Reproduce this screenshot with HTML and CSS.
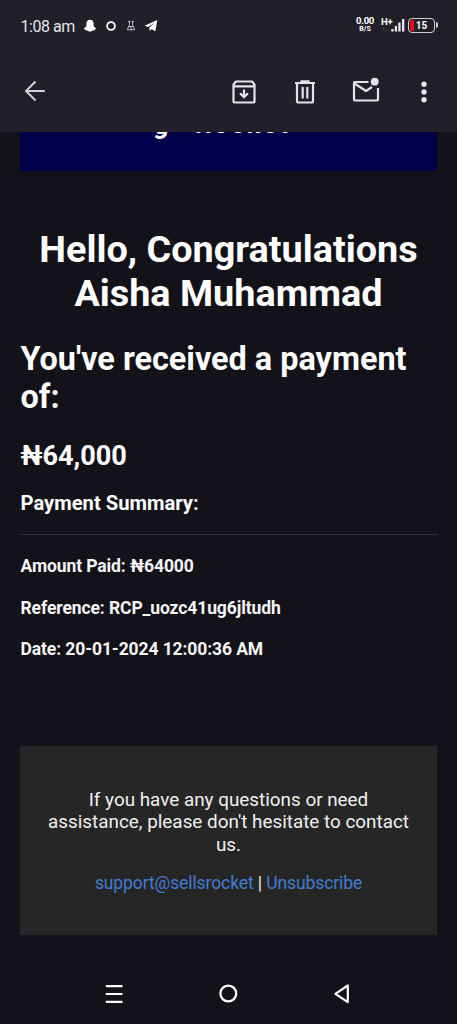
FILE: index.html
```html
<!DOCTYPE html>
<html lang="en">
<head>
<meta charset="utf-8">
<title>Payment received</title>
<link rel="stylesheet" href="styles.css">
</head>
<body>
<div class="screen">
  <header class="top">
    <div class="status">
      <div class="status-left">
        <span class="clock">1:08 am</span>
        <svg class="snap" width="14" height="14" viewBox="0 0 14 14"><path fill="#fff" d="M7 .8c2.300 0 3.600 1.500 3.600 3.700v2c.2.900.9 2 2.700 2.800.2.500-.7.900-1.500 1.100-.2.900-.6 1.100-1.900 1-1 .2-1.600 1.100-2.900 1.100s-1.900-.9-2.900-1.100c-1.300.1-1.700-.1-1.900-1C1.400 10.200.500 9.800.700 9.300 2.500 8.500 3.200 7.400 3.400 6.500v-2C3.400 2.300 4.700.8 7 .8z"/></svg>
        <svg class="ring" width="12" height="12" viewBox="0 0 12 12"><circle cx="6" cy="6" r="3.900" fill="none" stroke="#fff" stroke-width="1.800"/></svg>
        <svg class="flask" width="10" height="12" viewBox="0 0 10 12"><path fill="none" stroke="#cfced4" stroke-width=".9" d="M2 1.500h2.300M5.700 1.500H8M3.500 1.500v3L1.300 9.800h7.400L6.500 4.500v-3M3 6.500h4M5 6.500v3.300"/></svg>
        <svg class="plane" width="14" height="14" viewBox="0 0 14 14"><path fill="#fff" d="M.6 6.800 13.300 1 11.300 12.600 7.700 10 5.800 12 5.300 8.600 10.800 3.800 4 8z"/></svg>
      </div>
      <div class="status-right">
        <div class="rate"><b>0.00</b><span>B/S</span></div>
        <div class="net"><b>H+</b><span>↑↓</span></div>
        <svg class="signal" width="14" height="14" viewBox="0 0 14 14"><path fill="#e8e7ed" d="M.3 11h2.300v2.500H.3zM3.800 8h2.300v5.500H3.800zM7.300 4.500h2.300v9H7.300zM11 1h2.300v12.500H11z"/></svg>
        <div class="battery"><i class="level"></i><b>15</b></div>
      </div>
    </div>
    <nav class="actions">
      <svg class="back" width="22" height="22" viewBox="0 0 22 22"><path fill="none" stroke="#d2d0d8" stroke-width="1.900" d="M20.800 11H2M11.500 1.500 2 11l9.500 9.500"/></svg>
      <svg width="24" height="24" viewBox="0 0 24 24"><path fill="none" stroke="#e4e1ec" stroke-width="2.200" stroke-linejoin="round" d="M1.500 4.500v17q0 1 1 1h19q1 0 1-1v-17L20 1.500H4zM1.500 6.300h21"/><path fill="none" stroke="#e4e1ec" stroke-width="2.200" d="M12 9.500v7.500M8 13.300l4 4 4-4"/></svg>
      <svg width="22" height="24" viewBox="0 0 22 24"><path fill="none" stroke="#e4e1ec" stroke-width="2.200" d="M1 3h20M7.500 2V1.400h7V2M3 3v18q0 1.500 1.500 1.500h13q1.500 0 1.500-1.500V3M8.700 7v11.500M13.300 7v11.500"/></svg>
      <svg class="mail" width="28" height="26" viewBox="0 0 28 26"><path fill="none" stroke="#e4e1ec" stroke-width="2.200" stroke-linejoin="round" d="M16.500 5H3q-1 0-1 1v16.500q0 1 1 1h22q1 0 1-1V11M2.500 6.500 14 14l6-4"/><circle cx="22.700" cy="4.700" r="3.900" fill="#e4e1ec"/></svg>
      <svg width="6" height="22" viewBox="0 0 6 22"><g fill="#e4e1ec"><circle cx="3" cy="3.200" r="2.700"/><circle cx="3" cy="11" r="2.700"/><circle cx="3" cy="18.800" r="2.700"/></g></svg>
    </nav>
  </header>
  <main class="mail-body">
    <div class="banner"><span class="brand-s">g</span><span class="brand-r">Rocket</span></div>
    <h1>Hello, Congratulations<br>Aisha Muhammad</h1>
    <h2>You've received a payment<br>of:</h2>
    <p class="amount">₦64,000</p>
    <h3>Payment Summary:</h3>
    <div class="rows">
      <p class="r1">Amount Paid: ₦64000</p>
      <p class="r2">Reference: RCP_uozc41ug6jltudh</p>
      <p class="r3">Date: 20-01-2024 12:00:36 AM</p>
    </div>
    <footer class="foot">
      <p>If you have any questions or need<br>assistance, please don't hesitate to contact<br>us.</p>
      <p class="links"><a>support@sellsrocket</a> | <a>Unsubscribe</a></p>
    </footer>
  </main>
  <nav class="sysnav">
    <svg width="24" height="24" viewBox="0 0 24 24"><path stroke="#fff" stroke-width="2.200" d="M3.800 4.200h16.700M3.800 12h16.700M3.800 19.800h16.700"/></svg>
    <svg width="24" height="24" viewBox="0 0 24 24"><circle cx="12.300" cy="11.500" r="7.900" fill="none" stroke="#fff" stroke-width="2.300"/></svg>
    <svg width="24" height="24" viewBox="0 0 24 24"><path fill="none" stroke="#fff" stroke-width="2.200" stroke-linejoin="round" d="M17.800 3.500v16.600L5.400 11.800z"/></svg>
  </nav>
</div>
</body>
</html>
```
FILE: styles.css
```css
* { box-sizing: border-box; margin: 0; padding: 0; }
body { background: #13111a; font-family: Roboto, "Noto Sans", sans-serif; color: #fff; }
.screen { width: 457px; height: 1024px; display: flex; flex-direction: column; overflow: hidden; white-space: nowrap; }
svg { display: block; flex: none; }
.top { height: 132px; flex: none; background: #211f28; }
.status { height: 52px; display: flex; justify-content: space-between; padding: 0 22px 0 20.500px; align-items: center; }
.status-left { display: flex; align-items: center; color: #e6e5ea; }
.clock { font-size: 16px; width: 54px; letter-spacing: -.45px; }
.snap { margin-left: 8.500px; }
.ring { margin-left: 8px; }
.flask { margin-left: 9px; }
.plane { margin-left: 8px; }
.status-right { display: flex; align-items: center; height: 16px; margin-top: -2px; }
.rate { width: 18px; margin-right: 8px; text-align: center; display: flex; flex-direction: column; align-items: center; line-height: 8px; }
.rate b { font-size: 9.500px; letter-spacing: -.3px; }
.rate span { font-size: 7px; font-weight: bold; }
.net { width: 9px; display: flex; flex-direction: column; line-height: 8px; }
.net b { font-size: 9.500px; letter-spacing: -.3px; margin-left: -1px; }
.net span { font-size: 5px; color: #77757e; line-height: 6px; }
.signal { margin-right: 3px; }
.battery { width: 27px; height: 15px; border: 1.5px solid #d0cfd5; border-radius: 4px; position: relative; display: flex; align-items: center; justify-content: center; font-size: 10px; }
.battery::after { content: ""; position: absolute; right: -4px; top: 3px; width: 2px; height: 6px; background: #d0cfd5; border-radius: 0 2px 2px 0; }
.level { position: absolute; left: 1px; top: 1px; bottom: 1px; width: 4px; background: #e50914; border-radius: 2px 0 0 2px; }
.actions { height: 79px; display: flex; align-items: center; padding: 0 30px 0 24px; }
.actions .back { margin-right: 185.500px; margin-top: -1px; }
.actions svg + svg { margin-right: 38px; }
.actions svg:nth-child(3) { margin-right: 36.500px; }
.actions svg.mail { margin-right: 41px; margin-top: -3px; }
.actions svg:last-child { margin-right: 0; }
.mail-body { padding: 0 20px; flex: 1; }
.banner { height: 39px; width: 417px; background: #00004b; border-radius: 0 0 2px 2px; overflow: hidden; display: flex; padding-left: 135px; font-weight: 700; line-height: 22px; }
.brand-s { font-size: 26px; margin-top: -18px; width: 40px; font-style: italic; }
.brand-r { font-size: 25px; margin-top: -18px; letter-spacing: 2.900px; }
h1 { font-size: 37.800px; line-height: 44.500px; text-align: center; margin-top: 55.500px; font-weight: 700; }
h2 { font-size: 32.400px; line-height: 38px; margin-top: 23.500px; padding: .5px 0 0 .5px; font-weight: 700; }
.amount { font-size: 27.100px; line-height: 32px; margin-top: 24.500px; padding-left: .5px; font-weight: 700; }
h3 { font-size: 20.200px; line-height: 24px; margin-top: 19px; padding-left: .5px; font-weight: 700; }
.rows { border-top: 1px solid #302e36; margin-top: 19px; width: 418px; padding: 21px 0 0 .5px; font-size: 17.500px; letter-spacing: -.1px; font-weight: 700; line-height: 21px; color: #f5f5f7; }
.rows p + p { margin-top: 20.500px; }
.foot { width: 417px; height: 189px; background: #262626; margin-top: 86px; padding-top: 43px; text-align: center; font-size: 18.870px; line-height: 22.300px; color: #f0f0f0; }
.links { margin-top: 16.500px; font-size: 17.500px; letter-spacing: -.1px; }
.links a { color: #427bd2; }
.sysnav { height: 61px; flex: none; display: flex; justify-content: space-between; align-items: center; padding: 0 103px 0 102px; }
```
